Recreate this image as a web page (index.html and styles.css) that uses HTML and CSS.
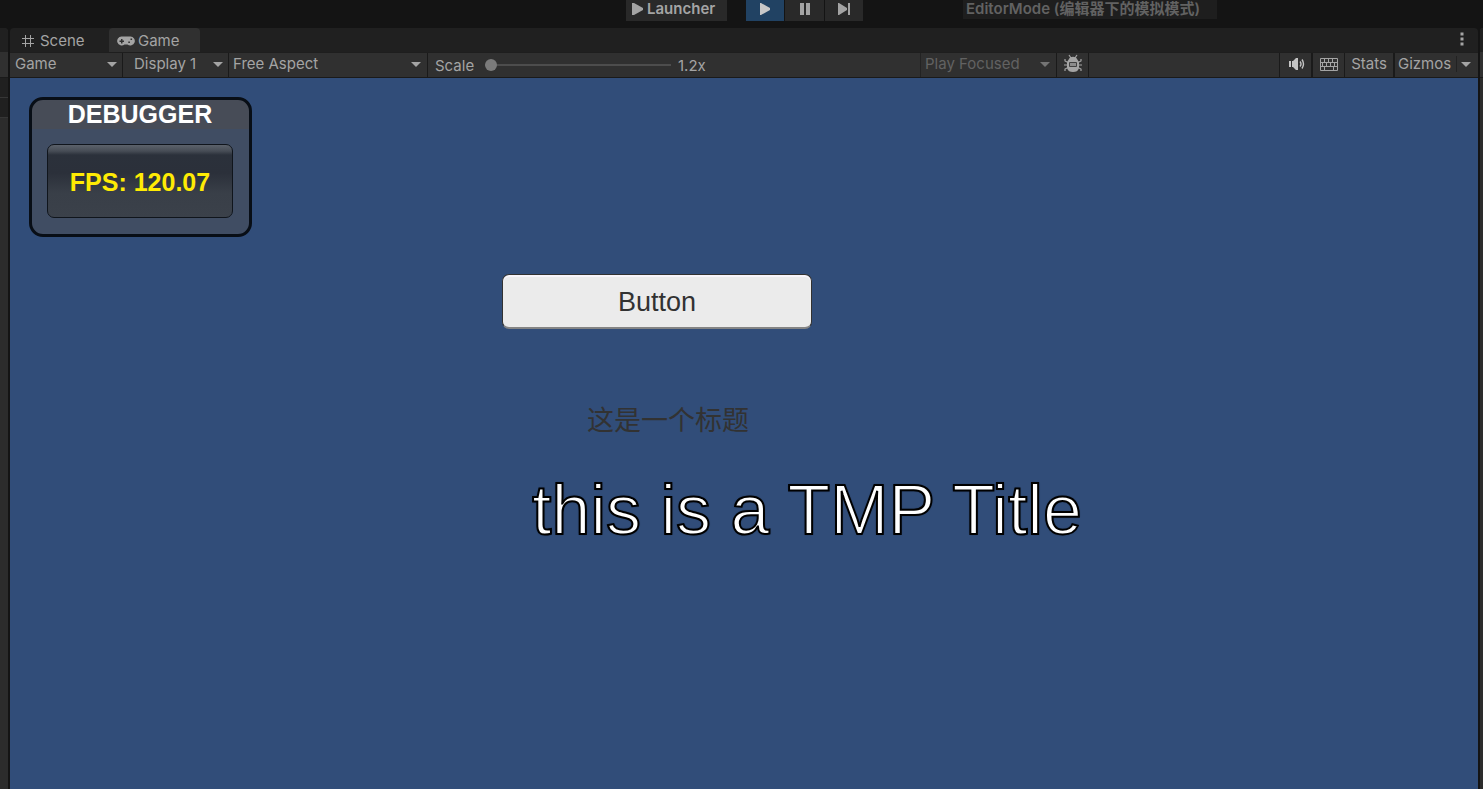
FILE: index.html
```html
<!DOCTYPE html>
<html lang="en">
<head>
<meta charset="utf-8">
<title>Game</title>
<link rel="stylesheet" href="styles.css">
</head>
<body>
<header class="topbar">
  <button class="launcher" type="button">
    <svg width="11" height="14" viewBox="0 0 11 14"><path d="M0 1v12h2l9-5V6L2 1z" fill="currentColor"/></svg>
    Launcher
  </button>
  <div class="playback">
    <button class="play active" type="button" aria-label="Play"><svg width="12" height="14" viewBox="0 0 12 14"><path d="M1 1v12h1l9-5V6L2 1z" fill="currentColor"/></svg></button>
    <button class="play" type="button" aria-label="Pause"><svg width="12" height="14" viewBox="0 0 12 14"><path d="M1 1h4v12H1zM7 1h4v12H7z" fill="currentColor"/></svg></button>
    <button class="play" type="button" aria-label="Step"><svg width="14" height="14" viewBox="0 0 14 14"><path d="M1 1v12h1l8-5V6L2 1zM11 1h2v12h-2z" fill="currentColor"/></svg></button>
  </div>
  <button class="mode" type="button" disabled>EditorMode (编辑器下的模拟模式)</button>
</header>

<div class="workspace">
  <aside class="dock dock-left"><div class="dock-tab"></div><div class="dock-tool"></div><div class="dock-row"></div><div class="dock-row"></div></aside>

  <main class="panel">
    <nav class="tabs">
      <button class="tab" type="button">
        <svg width="14" height="14" viewBox="0 0 14 14"><path d="M4.500 1v12M9.500 1v12M1 4.500h12M1 9.500h12" stroke="currentColor" fill="none"/></svg>
        Scene
      </button>
      <button class="tab tab-game selected" type="button">
        <svg width="18" height="12" viewBox="0 0 18 12"><path fill="currentColor" fill-rule="evenodd" d="M4.500 1.500h9a4.500 4.500 0 1 1-3 8h-3a4.500 4.500 0 1 1-3-8zM4 4v1.500H2.500v1.500H4v1.500h1.500V7H7V5.500H5.500V4zM13.500 3.500v1.600h1.600V3.500zM11.300 6.400V8h1.600V6.400z"/></svg>
        Game
      </button>
      <button class="more" type="button" aria-label="More"><svg width="4" height="14" viewBox="0 0 4 14"><path d="M.500.500h3v3h-3zM.500 5.500h3v3h-3zM.500 10.500h3v3h-3z" fill="currentColor"/></svg></button>
    </nav>

    <div class="toolbar">
      <div class="pick pick-view"><select aria-label="View"><option>Game</option></select></div>
      <div class="pick pick-display"><select aria-label="Display"><option>Display 1</option></select></div>
      <div class="pick pick-aspect"><select aria-label="Aspect"><option>Free Aspect</option></select></div>
      <div class="scale">
        <label for="scale">Scale</label>
        <input id="scale" type="range" min="0" max="100" value="0">
        <output for="scale">1.2x</output>
      </div>
      <div class="spacer"></div>
      <div class="pick pick-focus"><select aria-label="Play mode" disabled><option>Play Focused</option></select></div>
      <button class="tool tool-bug" type="button" aria-label="Debug">
        <svg width="18" height="20" viewBox="0 0 18 20"><g fill="none" stroke="currentColor" stroke-width="1.200"><path d="M5 1l2 3M13 1l-2 3M1 5v2l4 2M17 5v2l-4 2M0 11h5M18 11h-5M1 17v-2l4-2M17 17v-2l-4-2"/></g><path fill="currentColor" fill-rule="evenodd" d="M5 5c1-3 7-3 8 0l2 3v6c-1 3-3 4-6 4s-5-1-6-4V8z"/><path d="M5.500 8.500h7v4h-7z" fill="#8c8c8c" stroke="#404040"/></svg>
      </button>
      <div class="spacer"></div>
      <button class="tool first" type="button" aria-label="Mute audio">
        <svg width="18" height="14" viewBox="0 0 18 14"><path d="M2 4h2v6H2zM5 4h1l3-3h2v12H9l-3-3H5z" fill="currentColor"/><path d="M13 4.500q2 2.500 0 5M15 2.500q3 4.500 0 9" stroke="currentColor" stroke-width="1.400" fill="none"/></svg>
      </button>
      <button class="tool" type="button" aria-label="Shortcuts">
        <svg width="18" height="13" viewBox="0 0 18 13"><path d="M.500.500h17v12H.500zM0 4.500h18M0 8.500h18M4.500 0v4M8.500 0v4M12.500 0v4M2.500 4v4M6.500 4v4M10.500 4v4M14.500 4v4M4.500 8v4M13.500 8v4" stroke="currentColor" fill="none"/></svg>
      </button>
      <button class="tool tool-stats" type="button">Stats</button>
      <button class="tool tool-gizmos" type="button">Gizmos<span class="divider"></span><span class="caret"></span></button>
    </div>

    <section class="stage">
      <div class="debugger">
        <h2>DEBUGGER</h2>
        <button class="fps" type="button">FPS: 120.07</button>
      </div>
      <button class="game-button" type="button">Button</button>
      <p class="caption">这是一个标题</p>
      <h1 class="title">this is a TMP Title</h1>
    </section>
  </main>

  <aside class="dock dock-right"><div class="dock-tab"></div><div class="dock-tool"></div></aside>
</div>
</body>
</html>
```

FILE: styles.css
```css
* { box-sizing: border-box; }

body {
  margin: 0;
  height: 100vh;
  display: flex;
  flex-direction: column;
  overflow: hidden;
  background: #141414;
  color: #a4a4a4;
  font: 15px/20px Inter, "Noto Sans CJK SC", sans-serif;
}

button, select {
  margin: 0;
  padding: 0;
  border: 0;
  border-radius: 0;
  background: none;
  color: inherit;
  font: inherit;
}

svg { display: block; flex: none; }

/* Top bar */
.topbar {
  flex: none;
  height: 28px;
  display: flex;
  justify-content: flex-end;
  align-items: flex-start;
  padding-right: 266px;
  font-weight: 600;
}
.launcher {
  display: flex;
  align-items: center;
  gap: 4px;
  width: 101px;
  height: 21px;
  padding: 0 0 3px 6px;
  margin-right: 19px;
  background: #292929;
  white-space: nowrap;
}
.playback { display: flex; gap: 1px; margin-right: 100px; }
.play {
  display: flex;
  justify-content: center;
  align-items: center;
  width: 39px;
  height: 21px;
  padding-bottom: 3px;
  background: #292929;
}
.play.active { width: 38px; background: #214263; color: #c8c8c8; }
.play:last-child { width: 38px; }
.mode {
  width: 254px;
  height: 19px;
  padding: 0 0 2px 3px;
  background: #1e1e1e;
  color: #626262;
  line-height: 17px;
  text-align: left;
  white-space: nowrap;
}

/* Docks */
.workspace { flex: 1; min-height: 0; display: flex; gap: 2px; }
.dock { flex: none; background: #2c2c2c; overflow: hidden; }
.dock-left { width: 8px; border-top-right-radius: 4px; }
.dock-right { width: 3px; border-top-left-radius: 4px; }
.dock-tab { height: 24px; background: #202020; }
.dock-tool { height: 26px; background: #303030; border-bottom: 1px solid #1a1a1a; }
.dock-row { height: 20px; background: #202020; border-bottom: 1px solid #363636; }

.panel { flex: 1; min-width: 0; display: flex; flex-direction: column; }

/* Tabs */
.tabs {
  flex: none;
  height: 24px;
  display: flex;
  background: #202020;
  border-radius: 4px 4px 0 0;
}
.tab {
  display: flex;
  align-items: center;
  gap: 5px;
  width: 99px;
  padding: 2px 0 0 11px;
}
.tab-game { width: 91px; gap: 3px; padding-left: 8px; }
.tab.selected { background: #303030; border-radius: 4px 4px 0 0; }
.more { margin-left: auto; padding: 0 14px 2px; }

/* Toolbar */
.toolbar {
  flex: none;
  height: 26px;
  display: flex;
  background: #303030;
  border-top: 1px solid #1e1e1e;
  border-bottom: 1px solid #1a1a1a;
}
.pick { position: relative; flex: none; border-right: 1px solid #1a1a1a; }
.pick select {
  appearance: none;
  display: block;
  width: 100%;
  height: 100%;
  padding: 0 0 2px 5px;
  opacity: 1;
}
.pick::after, .caret {
  content: "";
  border: 5px solid transparent;
  border-top-color: #a4a4a4;
  border-bottom: 0;
  pointer-events: none;
}
.pick::after { position: absolute; right: 6px; top: 9px; }
.pick-view { width: 113px; }
.pick-display { width: 106px; }
.pick-display select { padding-left: 11px; }
.pick-aspect { width: 199px; }
.pick-aspect select { padding-left: 4px; }
.pick-focus { width: 137px; border-left: 1px solid #232323; color: #626262; }
.pick-focus select { padding-left: 4px; }
.pick-focus::after { border-top-color: #747474; }
.pick-view::after, .pick-display::after { right: 5px; }

.scale {
  flex: none;
  width: 302px;
  display: flex;
  align-items: center;
  padding: 2px 0 0 7px;
}
.scale label { width: 50px; }
.scale input {
  appearance: none;
  width: 186px;
  height: 12px;
  margin: 0 7px 2px 0;
  background: linear-gradient(#4d4d4d, #4d4d4d) center / 100% 2px no-repeat;
}
.scale input::-webkit-slider-thumb {
  appearance: none;
  width: 12px;
  height: 12px;
  border-radius: 50%;
  background: #7b7b7b;
}
.spacer { flex: 1; }
.tool {
  flex: none;
  display: flex;
  align-items: center;
  justify-content: center;
  width: 32px;
  padding-bottom: 2px;
  border-right: 1px solid #1a1a1a;
}
.tool-bug { color: #a4a4a4; }
.tool.first { width: 34px; border-left: 1px solid #1a1a1a; border-right-width: 2px; color: #c4c4c4; }
.tool-stats { width: 50px; border-right-width: 2px; }
.tool-gizmos {
  width: 83px;
  justify-content: space-between;
  padding: 0 7px 2px 3px;
  border-right: 0;
}
.divider { width: 1px; height: 16px; background: #222; }

/* Game view */
.stage {
  position: relative;
  flex: 1;
  min-height: 0;
  overflow: hidden;
  background: #314d79;
  font-family: "Liberation Sans", "Noto Sans CJK SC", sans-serif;
}
.stage h1, .stage h2, .stage p { margin: 0; }
.debugger {
  position: absolute;
  left: 19px;
  top: 19px;
  width: 223px;
  padding: 0 16px 16px 15px;
  border: 3px solid #080e16;
  border-radius: 14px;
  background: linear-gradient(#474c57 29px, #404d63 29px);
}
.debugger h2 {
  height: 44px;
  font-size: 25px;
  line-height: 28px;
  color: #fff;
  text-align: center;
}
.fps {
  display: block;
  width: 100%;
  height: 74px;
  padding-top: 2px;
  border: 1px solid #10151c;
  border-radius: 7px;
  background: linear-gradient(#5c626b, #474d56 6px, #2b313b 10px, #2b303a 28px, #393f48 48px, #3b414a);
  color: #ffeb04;
  font-size: 25px;
  font-weight: 700;
}
.game-button {
  position: absolute;
  left: 492px;
  top: 196px;
  width: 310px;
  height: 55px;
  padding-top: 2px;
  border: 1px solid #323232;
  border-bottom: 2px solid #848484;
  border-radius: 7px;
  background: #ebebeb;
  box-shadow: inset 0 2px #f8f5fa;
  color: #323232;
  font-size: 27px;
}
.caption {
  position: absolute;
  left: 577px;
  top: 323px;
  color: #323232;
  font-size: 27px;
  line-height: 40px;
}
.title {
  position: absolute;
  left: 522px;
  top: 392px;
  color: #fff;
  font-size: 70px;
  font-weight: 400;
  line-height: 80px;
  white-space: nowrap;
  -webkit-text-stroke: 2px #000;
  text-shadow: 0 0 2px #000;
}
```
